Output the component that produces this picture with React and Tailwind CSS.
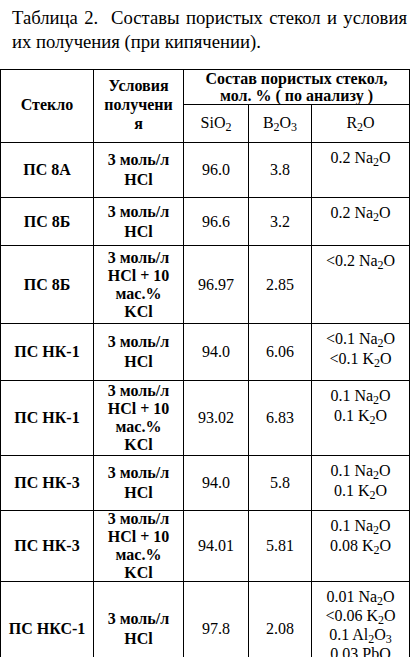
import React from "react";

const C = "border-r border-b border-black flex items-center justify-center text-center";
const R = "border-r border-b border-black flex flex-col items-center justify-start text-center pt-[5px]";

function Chem({ parts }) {
  return (
    <span>
      {parts.map((p, i) =>
        typeof p === "number" ? <sub key={i}>{p}</sub> : <React.Fragment key={i}>{p}</React.Fragment>
      )}
    </span>
  );
}

const rows = [
  { g: "ПС 8А", c: ["3 моль/л", "HCl"], si: "96.0", b: "3.8", r: [["0.2 Na", 2, "O"]] },
  { g: "ПС 8Б", c: ["3 моль/л", "HCl"], si: "96.6", b: "3.2", r: [["0.2 Na", 2, "O"]] },
  { g: "ПС 8Б", c: ["3 моль/л", "HCl + 10", "мас.%", "KCl"], si: "96.97", b: "2.85", r: [["<0.2 Na", 2, "O"]] },
  { g: "ПС НК-1", c: ["3 моль/л", "HCl"], si: "94.0", b: "6.06", r: [["<0.1 Na", 2, "O"], ["<0.1 K", 2, "O"]] },
  { g: "ПС НК-1", c: ["3 моль/л", "HCl + 10", "мас.%", "KCl"], si: "93.02", b: "6.83", r: [["0.1 Na", 2, "O"], ["0.1 K", 2, "O"]] },
  { g: "ПС НК-3", c: ["3 моль/л", "HCl"], si: "94.0", b: "5.8", r: [["0.1 Na", 2, "O"], ["0.1 K", 2, "O"]] },
  { g: "ПС НК-3", c: ["3 моль/л", "HCl + 10", "мас.%", "KCl"], si: "94.01", b: "5.81", r: [["0.1 Na", 2, "O"], ["0.08 K", 2, "O"]] },
  {
    g: "ПС НКС-1",
    c: ["3 моль/л", "HCl"],
    si: "97.8",
    b: "2.08",
    r: [["0.01 Na", 2, "O"], ["<0.06 K", 2, "O"], ["0.1 Al", 2, "O", 3], ["0.03 PbO"]],
    tight: true,
  },
];

export default function App() {
  return (
    <div
      className="w-[417px] h-[664px] bg-white text-black overflow-hidden"
      style={{ fontFamily: '"Liberation Serif", "Times New Roman", serif' }}
    >
      <div className="pl-[12px] pr-[10px] pt-[6px] text-[18.67px] leading-[24px]">
        <div className="text-justify [text-align-last:justify]">Таблица 2.&nbsp; Составы пористых стекол и условия</div>
        <div>их получения (при кипячении).</div>
      </div>
      <div className="mt-[15px] h-[588px] overflow-hidden">
        <div className="grid grid-cols-[93px_90px_65px_63px_98px] grid-rows-[35px_38px_55px_48px_78px_57px_75px_55px_71px_95px] w-[410px] border-l border-t border-black text-[16px] leading-[20px]">
          <div className={`${C} row-span-2 font-bold pb-[3px]`}>Стекло</div>
          <div className={`${C} row-span-2 font-bold leading-[19px] pb-[4px]`}>
            <div>
              Условия
              <br />
              получени
              <br />я
            </div>
          </div>
          <div className={`${C} col-span-3 font-bold leading-[17px] items-start`}>
            <div>
              Состав пористых стекол,
              <br />
              мол. % ( по анализу )
            </div>
          </div>
          <div className={`${C} pb-[2px]`}>
            <Chem parts={["SiO", 2]} />
          </div>
          <div className={`${C} pb-[2px]`}>
            <Chem parts={["B", 2, "O", 3]} />
          </div>
          <div className={`${C} pb-[2px]`}>
            <Chem parts={["R", 2, "O"]} />
          </div>
          {rows.map((row, i) => (
            <React.Fragment key={i}>
              <div className={`${C} font-bold`}>{row.g}</div>
              <div className={`${C} font-bold ${row.c.length > 2 ? "leading-[18px]" : ""}`}>
                <div>
                  {row.c.map((l, j) => (
                    <div key={j}>{l}</div>
                  ))}
                </div>
              </div>
              <div className={C}>{row.si}</div>
              <div className={C}>{row.b}</div>
              <div className={`${R} ${row.tight ? "leading-[19px]" : ""}`}>
                {row.r.map((p, j) => (
                  <div key={j}>
                    <Chem parts={p} />
                  </div>
                ))}
              </div>
            </React.Fragment>
          ))}
        </div>
      </div>
    </div>
  );
}
